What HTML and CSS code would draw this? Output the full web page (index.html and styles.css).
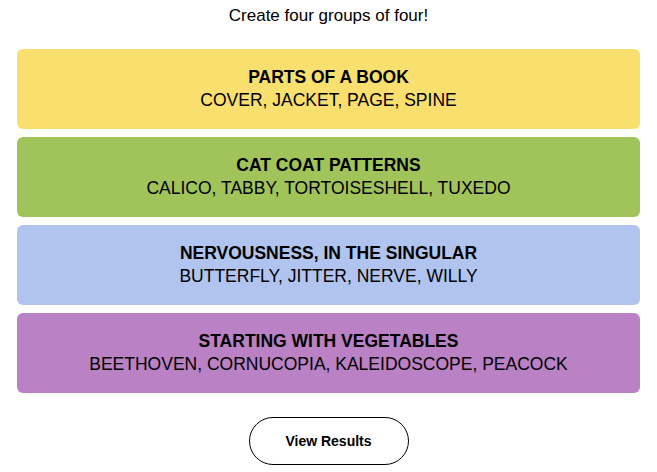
FILE: index.html
```html
<!DOCTYPE html>
<html lang="en">

<head>
  <meta charset="UTF-8">
  <meta name="viewport" content="width=device-width, initial-scale=1.0">
  <title>Connections</title>
  <link rel="stylesheet" href="styles.css">
</head>

<body>
  <main class="c-board">
    <p class="c-board__intro">Create four groups of four!</p>

    <section class="c-board__groups">
      <div class="c-group c-group--yellow">
        <h3 class="c-group__title">PARTS OF A BOOK</h3>
        <p class="c-group__words">COVER, JACKET, PAGE, SPINE</p>
      </div>
      <div class="c-group c-group--green">
        <h3 class="c-group__title">CAT COAT PATTERNS</h3>
        <p class="c-group__words">CALICO, TABBY, TORTOISESHELL, TUXEDO</p>
      </div>
      <div class="c-group c-group--blue">
        <h3 class="c-group__title">NERVOUSNESS, IN THE SINGULAR</h3>
        <p class="c-group__words">BUTTERFLY, JITTER, NERVE, WILLY</p>
      </div>
      <div class="c-group c-group--purple">
        <h3 class="c-group__title">STARTING WITH VEGETABLES</h3>
        <p class="c-group__words">BEETHOVEN, CORNUCOPIA, KALEIDOSCOPE, PEACOCK</p>
      </div>
    </section>

    <div class="c-board__actions">
      <button class="c-button" type="button">View Results</button>
    </div>
  </main>
</body>

</html>
```

FILE: styles.css
```css
*,
*::before,
*::after {
  margin: 0;
  box-sizing: border-box;
}

body {
  font-family: "Liberation Sans", Arial, sans-serif;
  color: #000;
  background: #fff;
  padding: 0 17px;
}

.c-board__intro {
  font-size: 17px;
  line-height: 20px;
  text-align: center;
  padding-top: 6px;
}

.c-board__groups {
  display: flex;
  flex-direction: column;
  gap: 8px;
  margin-top: 23px;
}

.c-group {
  height: 80px;
  border-radius: 6px;
  display: flex;
  flex-direction: column;
  justify-content: center;
  align-items: center;
  text-align: center;
}

.c-group--yellow { background: #f9df6d; }
.c-group--green { background: #a0c35a; }
.c-group--blue { background: #b0c4ef; }
.c-group--purple { background: #ba81c5; }

.c-group__title {
  font-size: 17.5px;
  line-height: 22px;
  font-weight: 700;
}

.c-group__words {
  font-size: 17.5px;
  line-height: 25px;
}

.c-board__actions {
  display: flex;
  justify-content: center;
  margin-top: 24px;
}

.c-button {
  width: 160px;
  height: 48px;
  border: 1px solid #000;
  border-radius: 24px;
  background: #fff;
  font-family: inherit;
  font-size: 14px;
  font-weight: 700;
  color: #000;
  cursor: pointer;
}
```
